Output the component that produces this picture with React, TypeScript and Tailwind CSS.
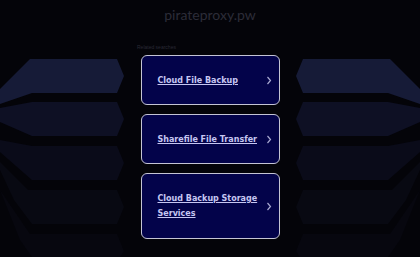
import React from "react"

const searches = ["Cloud File Backup", "Sharefile File Transfer", "Cloud Backup Storage Services"]

function Backdrop() {
  // perspective bands on both sides; right side is a mirror of the left
  const bands = (
    <>
      <polygon points="30,59 117,59 124,76 117,93 32,93 0,104 0,89" fill="#161b37" />
      <polygon points="32,102 117,102 124,119 117,136 32,136 0,122 0,108" fill="#0e1024" />
      <polygon points="32,146 117,146 124,163 117,180 32,180 0,152 0,140" fill="#0a0b19" />
      <polygon points="28,190 117,190 124,207 117,224 32,224 14,200 0,170 0,162" fill="#080912" />
      <polygon points="30,234 117,234 124,251 120,257 32,257 20,240 4,200 0,190" fill="#07070f" />
    </>
  )
  return (
    <svg className="absolute inset-0" width="420" height="257" viewBox="0 0 420 257">
      {bands}
      <g transform="translate(420,0) scale(-1,1)">{bands}</g>
    </svg>
  )
}

function Chevron() {
  return (
    <svg width="6" height="9" viewBox="0 0 6 9" className="shrink-0">
      <path d="M1.5 1 L4.5 4.5 L1.5 8" fill="none" stroke="#a8a8d0" strokeWidth="1.2" />
    </svg>
  )
}

export default function App() {
  return (
    <div className="relative w-[420px] h-[257px] overflow-hidden bg-[#040409] font-['DejaVu_Sans',sans-serif]">
      <Backdrop />
      <div className="relative flex flex-col items-center">
        <div className="pt-[6px] h-[30px] text-[14px] leading-[18px] text-[#2c2c38] font-['Lato',sans-serif]">
          pirateproxy.pw
        </div>
        <div className="w-[146px] mt-[14px] text-[5px] leading-[6px] text-[#2a2a36] font-['Liberation_Sans',sans-serif]">
          Related searches
        </div>
        <div className="flex flex-col gap-[9px] mt-[5px]">
          {searches.map((s, i) => (
            <div
              key={s}
              className={`w-[139px] ${i === 2 ? "h-[66px]" : "h-[50px]"} flex items-center justify-between pl-[16px] pr-[7px] rounded-[6px] border-[1.5px] border-[#c4c4d4] bg-[#03034a]`}
            >
              <span className="w-[106px] text-[8px] leading-[15px] font-bold text-[#c6c6f2] underline">
                {s}
              </span>
              <Chevron />
            </div>
          ))}
        </div>
      </div>
    </div>
  )
}
